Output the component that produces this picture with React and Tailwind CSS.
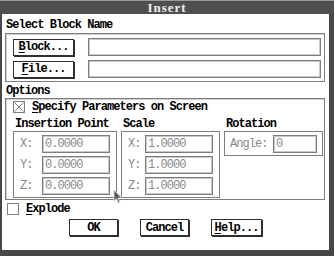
import React from "react";

const U = ({ children }) => <span className="underline underline-offset-[2px] decoration-1">{children}</span>;

const Btn = ({ children, w }) => (
  <div className={`${w} h-[17px] shrink-0 bg-white border border-[#2e2e2e] shadow-[1px_1px_0_#2e2e2e] flex items-center justify-center`}>
    {children}
  </div>
);

const Field = ({ value, w }) => (
  <div className={`${w} h-[18px] bg-white border border-[#7d7d7d] shadow-[inset_0_0_0_1px_#c9c9c9] flex items-center pl-[2px] font-normal text-[#8a8a8a]`}>
    {value}
  </div>
);

const Check = ({ checked }) => (
  <div className="w-[12px] h-[12px] shrink-0 border border-[#7d7d7d] bg-white flex items-center justify-center">
    {checked && (
      <svg width="10" height="10" viewBox="0 0 10 10">
        <path d="M0.5 0.5 L9.5 9.5 M9.5 0.5 L0.5 9.5" stroke="#808080" strokeWidth="1" />
      </svg>
    )}
  </div>
);

const Coord = ({ label, value, lw }) => (
  <div className="flex items-center">
    <span className={`${lw} font-normal text-[#8a8a8a]`}>{label}</span>
    <Field value={value} w="w-[68px]" />
  </div>
);

export default function App() {
  return (
    <div className="relative w-[334px] h-[256px] bg-[#474747] flex flex-col font-['Liberation_Mono',monospace] font-bold text-[12px] tracking-[-0.95px] leading-none text-black">
      {/* Title */}
      <div className="h-[14px] border-t border-[#9a9a9a] bg-[#4f4f4f] flex items-center justify-center">
        <span className="font-['Liberation_Serif',serif] text-[13px] tracking-[1px] text-[#f0f0f0]">Insert</span>
      </div>

      <div className="flex-1 flex pl-[2px] pr-[5px] pb-[6px]">
        <div className="flex-1 bg-white flex flex-col">
          <div className="h-[19px] flex items-center pl-[4px] pt-[3px]">Select Block Name</div>

          {/* Block / File box */}
          <div className="ml-[3px] w-[320px] border border-[#7d7d7d] shadow-[inset_1px_1px_0_#cfcfcf] flex flex-col gap-[4px] pl-[7px] pr-[3px] pt-[4px] pb-[3px]">
            <div className="flex items-center gap-[14px]">
              <Btn w="w-[61px]"><U>B</U>lock...</Btn>
              <div className="flex-1 h-[18px] border border-[#7d7d7d] shadow-[inset_0_0_0_1px_#c9c9c9]" />
            </div>
            <div className="flex items-center gap-[14px]">
              <Btn w="w-[61px]"><U>F</U>ile...</Btn>
              <div className="flex-1 h-[18px] border border-[#7d7d7d] shadow-[inset_0_0_0_1px_#c9c9c9]" />
            </div>
          </div>

          <div className="h-[16px] flex items-center pl-[4px] pt-[2px]">Options</div>

          {/* Options box */}
          <div className="ml-[3px] w-[320px] h-[102px] border border-[#7d7d7d] shadow-[inset_1px_1px_0_#cfcfcf] flex flex-col pl-[7px] pt-[1px]">
            <div className="flex items-center gap-[7px] h-[13px]">
              <Check checked />
              <span><U>S</U>pecify Parameters on Screen</span>
            </div>
            <div className="flex gap-[4px] mt-[3px]">
              <div className="w-[104px] flex flex-col">
                <div className="h-[15px] flex items-center pl-[2px]">Insertion Point</div>
                <div className="h-[67px] border border-[#7d7d7d] flex flex-col gap-[3px] pl-[6px] pt-[3px]">
                  <Coord label="X:" value="0.0000" lw="w-[22px]" />
                  <Coord label="Y:" value="0.0000" lw="w-[22px]" />
                  <Coord label="Z:" value="0.0000" lw="w-[22px]" />
                </div>
              </div>
              <div className="w-[99px] flex flex-col">
                <div className="h-[15px] flex items-center pl-[2px]">Scale</div>
                <div className="h-[67px] border border-[#7d7d7d] flex flex-col gap-[3px] pl-[6px] pt-[3px]">
                  <Coord label="X:" value="1.0000" lw="w-[17px]" />
                  <Coord label="Y:" value="1.0000" lw="w-[17px]" />
                  <Coord label="Z:" value="1.0000" lw="w-[17px]" />
                </div>
              </div>
              <div className="w-[99px] flex flex-col">
                <div className="h-[15px] flex items-center pl-[2px]">Rotation</div>
                <div className="h-[25px] border border-[#7d7d7d] flex items-center pl-[5px]">
                  <span className="w-[43px] font-normal text-[#8a8a8a]">Angle:</span>
                  <Field value="0" w="w-[44px]" />
                </div>
              </div>
            </div>
          </div>

          <div className="flex items-center gap-[7px] pl-[5px] mt-[3px] h-[12px]">
            <Check />
            <span><U>E</U>xplode</span>
          </div>

          <div className="flex gap-[22px] pl-[67px] mt-[4px]">
            <Btn w="w-[49px]">OK</Btn>
            <Btn w="w-[49px]">Cancel</Btn>
            <Btn w="w-[51px]"><U>H</U>elp...</Btn>
          </div>
        </div>
      </div>

      {/* mouse pointer */}
      <svg className="absolute left-[113px] top-[189px]" width="10" height="15" viewBox="0 0 10 15">
        <path d="M1 1 L1 12 L3.5 9.5 L5.5 14 L7 13.3 L5 9 L8.5 9 Z" fill="#5a5a5a" stroke="#d0d0d0" strokeWidth="1" />
      </svg>
    </div>
  );
}
